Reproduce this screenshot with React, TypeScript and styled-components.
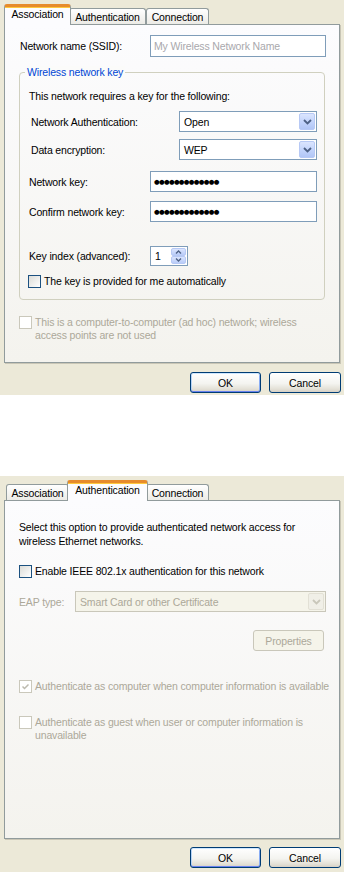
import styled, { createGlobalStyle, css } from "styled-components";

const FONT = `"Liberation Sans", Arial, sans-serif`;
const DISABLED = "#aca899";

const GlobalStyle = createGlobalStyle`
  html, body {
    margin: 0;
    padding: 0;
    background: #fff;
  }
  body {
    font-family: ${FONT};
    font-size: 10.5px;
    letter-spacing: -0.15px;
    color: #000;
  }
  * {
    box-sizing: border-box;
  }
`;

const Page = styled.div`
  width: 346px;
  display: flex;
  flex-direction: column;
  gap: 81px;
`;

const Dialog = styled.div<{ $height: number }>`
  width: 344px;
  height: ${(p) => p.$height}px;
  background: #ece9d8;
  padding: 4px 0 0 4px;
  display: flex;
  flex-direction: column;
`;

const TabStrip = styled.div`
  display: flex;
  align-items: flex-end;
  height: 21px;
  padding-left: 2px;
  margin-bottom: -1px;
  position: relative;
  z-index: 1;
`;

const Tab = styled.div<{ $width: number; $active?: boolean }>`
  width: ${(p) => p.$width}px;
  height: 16px;
  margin-bottom: 1px;
  border: 1px solid #919b9c;
  border-bottom: none;
  border-radius: 3px 3px 0 0;
  background: linear-gradient(#fff, #ecebe6);
  display: flex;
  align-items: center;
  justify-content: center;
  padding-top: 1px;
  white-space: nowrap;
  ${(p) =>
    p.$active &&
    css`
      width: ${p.$width + 4}px;
      height: 21px;
      margin: 0 -2px;
      border-top: 3px solid #e68b2c;
      box-shadow: inset 0 1px 0 #ffc83c;
      background: #fcfcfe;
      position: relative;
      z-index: 1;
      padding-top: 0;
      padding-bottom: 4px;
    `}
`;

const Panel = styled.div`
  width: 336px;
  height: 339px;
  border: 1px solid #919b9c;
  box-shadow: 1px 1px 0 #c9c6b6;
  background: linear-gradient(#fcfcfe, #f4f3ee);
  display: flex;
  flex-direction: column;
`;

const Row = styled.div<{ $top: number; $left?: number }>`
  display: flex;
  align-items: center;
  margin-top: ${(p) => p.$top}px;
  margin-left: ${(p) => p.$left ?? 0}px;
`;

const CheckRow = styled(Row)`
  align-items: flex-start;
  line-height: 13px;
`;

const Label = styled.span<{ $width?: number; $disabled?: boolean }>`
  width: ${(p) => (p.$width ? `${p.$width}px` : "auto")};
  flex-shrink: 0;
  white-space: nowrap;
  color: ${(p) => (p.$disabled ? DISABLED : "#000")};
`;

const Paragraph = styled.p<{ $top: number; $left: number }>`
  margin: ${(p) => p.$top}px 0 0 ${(p) => p.$left}px;
  line-height: 14px;
  white-space: nowrap;
`;

const Group = styled.div`
  position: relative;
  margin: 15px 0 0 14px;
  width: 306px;
  height: 228px;
  border: 1px solid #d0d0bf;
  border-radius: 4px;
  display: flex;
  flex-direction: column;
`;

const Legend = styled.span`
  position: absolute;
  top: -7px;
  left: 5px;
  padding: 0 2px;
  line-height: 13px;
  color: #0046d5;
  background: #fbfbfa;
`;

const TextBox = styled.div<{ $width: number; $height: number }>`
  width: ${(p) => p.$width}px;
  height: ${(p) => p.$height}px;
  border: 1px solid #7f9db9;
  background: #fff;
  display: flex;
  align-items: center;
  padding-left: 3px;
  flex-shrink: 0;
`;

const Placeholder = styled.span`
  color: #a9a8ac;
  white-space: nowrap;
`;

const Dots = styled.span`
  font-family: "DejaVu Sans", sans-serif;
  font-size: 6.5px;
  letter-spacing: -0.7px;
  white-space: nowrap;
`;

const Combo = styled.div<{ $width: number; $disabled?: boolean }>`
  width: ${(p) => p.$width}px;
  height: 21px;
  border: 1px solid ${(p) => (p.$disabled ? "#c9c7ba" : "#7f9db9")};
  background: ${(p) => (p.$disabled ? "#f5f4ea" : "#fff")};
  color: ${(p) => (p.$disabled ? DISABLED : "#000")};
  display: flex;
  align-items: center;
  justify-content: space-between;
  padding: 1px 1px 1px 4px;
  flex-shrink: 0;
  white-space: nowrap;
`;

const ComboButton = styled.span<{ $disabled?: boolean }>`
  width: 16px;
  height: 17px;
  border-radius: 2px;
  border: 1px solid ${(p) => (p.$disabled ? "#e2e0d5" : "#b7c9f5")};
  background: ${(p) =>
    p.$disabled ? "#f0efe7" : "linear-gradient(#dbe5fe, #c0d2fb 60%, #b1c6f6)"};
  color: ${(p) => (p.$disabled ? "#c9c7ba" : "#4d6185")};
  display: flex;
  align-items: center;
  justify-content: center;
`;

const Spinner = styled(TextBox)`
  justify-content: space-between;
  padding: 1px 1px 1px 4px;
`;

const SpinButtons = styled.span`
  width: 15px;
  height: 100%;
  display: flex;
  flex-direction: column;
`;

const SpinHalf = styled.span`
  flex: 1;
  border: 1px solid #b7c9f5;
  border-radius: 2px;
  background: linear-gradient(#dbe5fe, #b9ccf8);
  color: #4d6185;
  display: flex;
  align-items: center;
  justify-content: center;
`;

const Box = styled.span<{ $disabled?: boolean }>`
  width: 13px;
  height: 13px;
  flex-shrink: 0;
  margin-right: 3px;
  border: 1px solid ${(p) => (p.$disabled ? "#cac8bb" : "#1c5180")};
  background: ${(p) =>
    p.$disabled ? "#fff" : "linear-gradient(135deg, #dcdcd7, #fff)"};
  display: flex;
  align-items: center;
  justify-content: center;
`;

const ButtonBar = styled.div<{ $top: number }>`
  display: flex;
  justify-content: flex-end;
  gap: 8px;
  margin-top: ${(p) => p.$top}px;
  padding-right: 3px;
`;

const PushButton = styled.button<{ $width: number; $default?: boolean }>`
  font: inherit;
  letter-spacing: inherit;
  color: #000;
  width: ${(p) => p.$width}px;
  height: 21px;
  padding: 0;
  border: 1px solid #003c74;
  border-radius: 3px;
  background: linear-gradient(#fff, #f4f4f0 55%, #e3e0d6 85%, #d6d0c5);
  ${(p) =>
    p.$default &&
    css`
      box-shadow: inset 0 1px 0 #cee7ff, inset 0 -1px 0 #6982ee,
        inset 1px 0 0 #b8d4f5, inset -1px 0 0 #89adf4;
    `}
  &:disabled {
    border-color: #c9c7ba;
    color: ${DISABLED};
    background: #f5f4ea;
  }
`;

const RightButton = styled(PushButton)<{ $top: number }>`
  align-self: flex-end;
  margin-top: ${(p) => p.$top}px;
  margin-right: 15px;
`;

function Chevron() {
  return (
    <svg width="9" height="6" viewBox="0 0 9 6">
      <path d="M1 1 L4.5 4.5 L8 1" fill="none" stroke="currentColor" strokeWidth="1.8" />
    </svg>
  );
}

function SpinArrow({ up }: { up?: boolean }) {
  return (
    <svg width="7" height="4" viewBox="0 0 7 4">
      <path
        d={up ? "M1 3.5 L3.5 1 L6 3.5" : "M1 0.5 L3.5 3 L6 0.5"}
        fill="none"
        stroke="currentColor"
        strokeWidth="1.3"
      />
    </svg>
  );
}

function Check({ disabled, checked, children }: { disabled?: boolean; checked?: boolean; children?: React.ReactNode }) {
  return (
    <>
      <Box $disabled={disabled}>
        {checked && (
          <svg width="7" height="7" viewBox="0 0 7 7">
            <path d="M0.5 3.5 L2.5 5.5 L6.5 1.5" fill="none" stroke={disabled ? "#bcbaae" : "#21a121"} strokeWidth="1.5" />
          </svg>
        )}
      </Box>
      <Label $disabled={disabled}>{children}</Label>
    </>
  );
}

function Tabs({ active }: { active: number }) {
  const tabs: [string, number][] = [
    ["Association", 63],
    ["Authentication", 77],
    ["Connection", 63],
  ];
  return (
    <TabStrip>
      {tabs.map(([name, width], i) => (
        <Tab key={name} $width={width} $active={i === active}>
          {name}
        </Tab>
      ))}
    </TabStrip>
  );
}

function Buttons({ top }: { top: number }) {
  return (
    <ButtonBar $top={top}>
      <PushButton $width={71} $default>
        OK
      </PushButton>
      <PushButton $width={72}>Cancel</PushButton>
    </ButtonBar>
  );
}

function AssociationDialog() {
  return (
    <Dialog $height={395}>
      <Tabs active={0} />
      <Panel>
        <Row $top={10} $left={15}>
          <Label $width={130}>Network name (SSID):</Label>
          <TextBox $width={176} $height={22}>
            <Placeholder>My Wireless Network Name</Placeholder>
          </TextBox>
        </Row>
        <Group>
          <Legend>Wireless network key</Legend>
          <Row $top={17} $left={9}>
            <Label>This network requires a key for the following:</Label>
          </Row>
          <Row $top={9} $left={11}>
            <Label $width={148}>Network Authentication:</Label>
            <Combo $width={138}>
              Open
              <ComboButton>
                <Chevron />
              </ComboButton>
            </Combo>
          </Row>
          <Row $top={7} $left={11}>
            <Label $width={148}>Data encryption:</Label>
            <Combo $width={138}>
              WEP
              <ComboButton>
                <Chevron />
              </ComboButton>
            </Combo>
          </Row>
          <Row $top={11} $left={9}>
            <Label $width={121}>Network key:</Label>
            <TextBox $width={167} $height={21}>
              <Dots>●●●●●●●●●●●●●</Dots>
            </TextBox>
          </Row>
          <Row $top={9} $left={9}>
            <Label $width={121}>Confirm network key:</Label>
            <TextBox $width={167} $height={21}>
              <Dots>●●●●●●●●●●●●●</Dots>
            </TextBox>
          </Row>
          <Row $top={24} $left={9}>
            <Label $width={121}>Key index (advanced):</Label>
            <Spinner $width={38} $height={20}>
              1
              <SpinButtons>
                <SpinHalf>
                  <SpinArrow up />
                </SpinHalf>
                <SpinHalf>
                  <SpinArrow />
                </SpinHalf>
              </SpinButtons>
            </Spinner>
          </Row>
          <CheckRow $top={9} $left={8}>
            <Check>The key is provided for me automatically</Check>
          </CheckRow>
        </Group>
        <CheckRow $top={16} $left={14}>
          <Check disabled>
            This is a computer-to-computer (ad hoc) network; wireless
            <br />
            access points are not used
          </Check>
        </CheckRow>
      </Panel>
      <Buttons top={9} />
    </Dialog>
  );
}

function AuthenticationDialog() {
  return (
    <Dialog $height={396}>
      <Tabs active={1} />
      <Panel>
        <Paragraph $top={19} $left={14}>
          Select this option to provide authenticated network access for
          <br />
          wireless Ethernet networks.
        </Paragraph>
        <CheckRow $top={17} $left={14}>
          <Check>Enable IEEE 802.1x authentication for this network</Check>
        </CheckRow>
        <Row $top={13} $left={14}>
          <Label $width={56} $disabled>
            EAP type:
          </Label>
          <Combo $width={251} $disabled>
            Smart Card or other Certificate
            <ComboButton $disabled>
              <Chevron />
            </ComboButton>
          </Combo>
        </Row>
        <RightButton $width={71} $top={18} disabled>
          Properties
        </RightButton>
        <CheckRow $top={29} $left={14}>
          <Check disabled checked>
            Authenticate as computer when computer information is available
          </Check>
        </CheckRow>
        <CheckRow $top={23} $left={14}>
          <Check disabled>
            Authenticate as guest when user or computer information is
            <br />
            unavailable
          </Check>
        </CheckRow>
      </Panel>
      <Buttons top={8} />
    </Dialog>
  );
}

export default function App() {
  return (
    <>
      <GlobalStyle />
      <Page>
        <AssociationDialog />
        <AuthenticationDialog />
      </Page>
    </>
  );
}
